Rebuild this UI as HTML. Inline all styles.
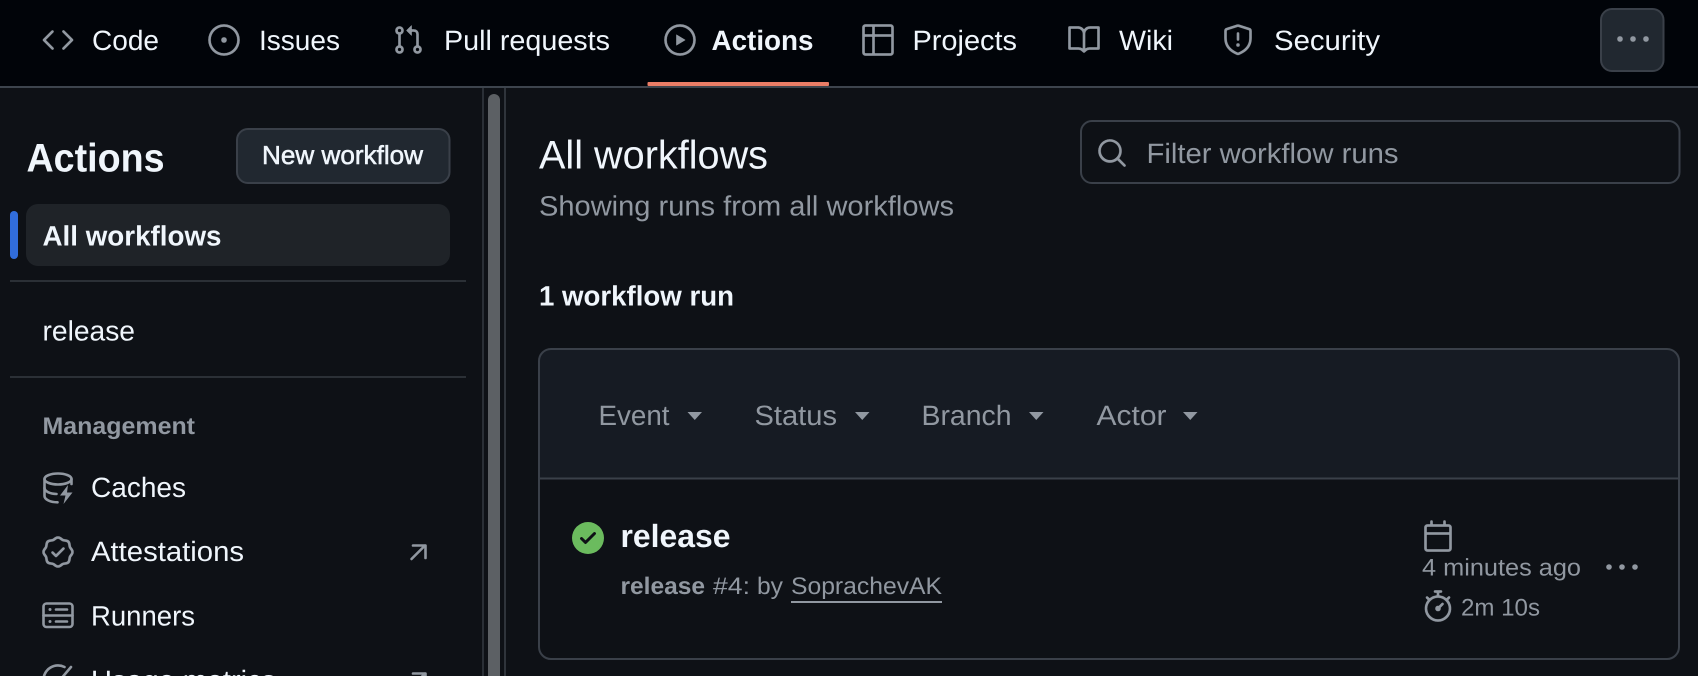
<!DOCTYPE html>
<html lang="en">
<head>
<meta charset="utf-8">
<title>Actions</title>
<style>
html,body{margin:0;padding:0;background:#0e1116;width:1698px;height:676px;overflow:hidden}
svg{display:block;font-family:"Liberation Sans",Arial,sans-serif;text-rendering:geometricPrecision;filter:blur(.3px)}
.t{fill:#f0f6fc}.m{fill:#9198a1}.b{font-weight:700}
.sb{fill:#f0f6fc;stroke:#f0f6fc;stroke-width:.55px}
.i{fill:#9198a1;fill-rule:evenodd;stroke:#0e1116;stroke-width:.18}
.h{stroke:#010409}
.k{stroke:#212830}
.s{fill:none;stroke:#9198a1;stroke-width:2.6;stroke-linecap:round;stroke-linejoin:round}
</style>
</head>
<body>
<svg width="1698" height="676" viewBox="0 0 1698 676" xmlns="http://www.w3.org/2000/svg">
<rect width="1698" height="676" fill="#0e1116"/>
<!-- header -->
<rect width="1698" height="86" fill="#010409"/>
<rect y="86" width="1698" height="2" fill="#3d444d"/>
<rect x="647.5" y="82" width="181.5" height="4" rx="1" fill="#ea7d66"/>

<g transform="translate(42,24) scale(2)"><path class="i h" d="m11.28 3.22 4.25 4.25a.75.75 0 0 1 0 1.06l-4.25 4.25a.749.749 0 0 1-1.275-.326.749.749 0 0 1 .215-.734L13.94 8l-3.72-3.72a.749.749 0 0 1 .326-1.275.749.749 0 0 1 .734.215Zm-6.56 0a.751.751 0 0 1 1.042.018.751.751 0 0 1 .018 1.042L2.06 8l3.72 3.72a.749.749 0 0 1-.326 1.275.749.749 0 0 1-.734-.215L.47 8.53a.75.75 0 0 1 0-1.06Z"/></g>
<text x="92" y="50" font-size="28" class="t" textLength="67" lengthAdjust="spacingAndGlyphs">Code</text>

<g transform="translate(208,24) scale(2)"><path class="i h" d="M8 9.5a1.5 1.5 0 1 0 0-3 1.5 1.5 0 0 0 0 3Z"/><path class="i h" d="M8 0a8 8 0 1 1 0 16A8 8 0 0 1 8 0ZM1.5 8a6.5 6.5 0 1 0 13 0 6.5 6.5 0 0 0-13 0Z"/></g>
<text x="259" y="50" font-size="28" class="t" textLength="81" lengthAdjust="spacingAndGlyphs">Issues</text>

<g transform="translate(392,24) scale(2)"><path class="i h" d="M1.5 3.25a2.25 2.25 0 1 1 3 2.122v5.256a2.251 2.251 0 1 1-1.5 0V5.372A2.25 2.25 0 0 1 1.5 3.25Zm5.677-.177L9.573.677A.25.25 0 0 1 10 .854V2.5h1A2.5 2.5 0 0 1 13.5 5v5.628a2.251 2.251 0 1 1-1.5 0V5a1 1 0 0 0-1-1h-1v1.646a.25.25 0 0 1-.427.177L7.177 3.427a.25.25 0 0 1 0-.354ZM3.75 2.5a.75.75 0 1 0 0 1.5.75.75 0 0 0 0-1.5Zm0 9.5a.75.75 0 1 0 0 1.5.75.75 0 0 0 0-1.5Zm8.25.75a.75.75 0 1 0 1.5 0 .75.75 0 0 0-1.5 0Z"/></g>
<text x="444" y="50" font-size="28" class="t" textLength="166" lengthAdjust="spacingAndGlyphs">Pull requests</text>

<g transform="translate(664,24) scale(2)"><path class="i h" d="M8 0a8 8 0 1 1 0 16A8 8 0 0 1 8 0ZM1.5 8a6.5 6.5 0 1 0 13 0 6.5 6.5 0 0 0-13 0Zm4.879-2.773 4.264 2.559a.25.25 0 0 1 0 .428l-4.264 2.559A.25.25 0 0 1 6 10.559V5.442a.25.25 0 0 1 .379-.215Z"/></g>
<text x="711.5" y="50" font-size="28" class="t b" textLength="102" lengthAdjust="spacingAndGlyphs">Actions</text>

<g transform="translate(862,24) scale(2)"><path class="i h" d="M0 1.75C0 .784.784 0 1.75 0h12.5C15.216 0 16 .784 16 1.75v12.5A1.75 1.75 0 0 1 14.25 16H1.75A1.75 1.75 0 0 1 0 14.25ZM6.5 6.5v8h7.75a.25.25 0 0 0 .25-.25V6.5Zm8-1.5V1.75a.25.25 0 0 0-.25-.25H6.5V5Zm-13 1.5v7.75c0 .138.112.25.25.25H5v-8ZM5 5V1.5H1.75a.25.25 0 0 0-.25.25V5Z"/></g>
<text x="912.500" y="50" font-size="28" class="t" textLength="104.500" lengthAdjust="spacingAndGlyphs">Projects</text>

<g transform="translate(1068,24) scale(2)"><path class="i h" d="M0 1.75A.75.75 0 0 1 .75 1h4.253c1.227 0 2.317.59 3 1.501A3.743 3.743 0 0 1 11.006 1h4.245a.75.75 0 0 1 .75.75v10.5a.75.75 0 0 1-.75.75h-4.507a2.25 2.25 0 0 0-1.591.659l-.622.621a.75.75 0 0 1-1.06 0l-.622-.621A2.25 2.25 0 0 0 5.258 13H.75a.75.75 0 0 1-.75-.75Zm7.251 10.324.004-5.073-.002-2.253A2.25 2.25 0 0 0 5.003 2.5H1.5v9h3.757a3.75 3.75 0 0 1 1.994.574ZM8.755 4.75l-.004 7.322a3.752 3.752 0 0 1 1.992-.572H14.5v-9h-3.495a2.25 2.25 0 0 0-2.25 2.25Z"/></g>
<text x="1119" y="50" font-size="28" class="t" textLength="54" lengthAdjust="spacingAndGlyphs">Wiki</text>

<g transform="translate(1222,24) scale(2)"><path class="i h" d="M7.467.133a1.748 1.748 0 0 1 1.066 0l5.25 1.68A1.75 1.75 0 0 1 15 3.48V7c0 1.566-.32 3.182-1.303 4.682-.983 1.498-2.585 2.813-5.032 3.855a1.697 1.697 0 0 1-1.33 0c-2.447-1.042-4.049-2.357-5.032-3.855C1.32 10.182 1 8.566 1 7V3.48a1.75 1.75 0 0 1 1.217-1.667Zm.61 1.429a.25.25 0 0 0-.153 0l-5.25 1.68a.25.25 0 0 0-.174.238V7c0 1.358.275 2.666 1.057 3.86.784 1.194 2.121 2.34 4.366 3.297a.196.196 0 0 0 .154 0c2.245-.956 3.582-2.104 4.366-3.298C13.225 9.666 13.5 8.36 13.5 7V3.48a.25.25 0 0 0-.174-.237l-5.25-1.68ZM8.75 4.75v3a.75.75 0 0 1-1.5 0v-3a.75.75 0 0 1 1.5 0ZM9 10.5a1 1 0 1 1-2 0 1 1 0 0 1 2 0Z"/></g>
<text x="1274" y="50" font-size="28" class="t" textLength="106" lengthAdjust="spacingAndGlyphs">Security</text>

<rect x="1601" y="9" width="62.500" height="62" rx="11" fill="#212830" stroke="#3a4049" stroke-width="2"/>
<g transform="translate(1617,24) scale(2)"><path class="i k" d="M8 9a1.5 1.5 0 1 0 0-3 1.5 1.5 0 0 0 0 3ZM1.5 9a1.5 1.5 0 1 0 0-3 1.5 1.5 0 0 0 0 3Zm13 0a1.5 1.5 0 1 0 0-3 1.5 1.5 0 0 0 0 3Z"/></g>

<!-- sidebar -->
<text x="26.500" y="171.500" font-size="40" class="t b" textLength="138" lengthAdjust="spacingAndGlyphs">Actions</text>
<rect x="237" y="129" width="212.500" height="54" rx="11" fill="#212830" stroke="#3a4049" stroke-width="2"/>
<text x="262" y="164" font-size="26" class="sb" textLength="161" lengthAdjust="spacingAndGlyphs">New workflow</text>

<rect x="10" y="211" width="8" height="48" rx="4" fill="#316ddb"/>
<rect x="26" y="204" width="424" height="62" rx="12" fill="#1f2328"/>
<text x="42.500" y="245.500" font-size="28" class="t b" textLength="179" lengthAdjust="spacingAndGlyphs">All workflows</text>
<rect x="10" y="280" width="456" height="2" fill="#2b3036"/>
<text x="42.500" y="340.500" font-size="28" class="t" textLength="92.500" lengthAdjust="spacingAndGlyphs">release</text>
<rect x="10" y="376" width="456" height="2" fill="#2b3036"/>
<text x="42.500" y="434" font-size="24" class="m b" textLength="152.500" lengthAdjust="spacingAndGlyphs">Management</text>

<!-- caches -->
<g class="s"><ellipse cx="58" cy="479" rx="13.500" ry="5.500"/><path d="M44.500 479V496c0 3.600 6 6.300 13 6.300"/><path d="M44.500 488c0 3.300 5.500 5.800 12 6"/><path d="M71.500 479v5"/></g>
<path d="M68 485l-8 10.500h5.500l-2 8.500 9-11.500h-5.500z" fill="#9198a1"/>
<text x="91" y="497" font-size="28" class="t" textLength="95" lengthAdjust="spacingAndGlyphs">Caches</text>

<!-- verified -->
<g transform="translate(42,536) scale(2)"><path class="i" d="m9.585.52.929.68c.153.112.331.186.518.215l1.138.175a2.678 2.678 0 0 1 2.24 2.24l.174 1.139c.029.187.103.365.215.518l.68.928a2.677 2.677 0 0 1 0 3.17l-.68.928a1.174 1.174 0 0 0-.215.518l-.175 1.138a2.678 2.678 0 0 1-2.241 2.241l-1.138.175a1.17 1.17 0 0 0-.518.215l-.928.68a2.677 2.677 0 0 1-3.17 0l-.928-.68a1.174 1.174 0 0 0-.518-.215L3.83 14.41a2.678 2.678 0 0 1-2.24-2.24l-.175-1.138a1.17 1.17 0 0 0-.215-.518l-.68-.928a2.677 2.677 0 0 1 0-3.17l.68-.928c.112-.153.186-.331.215-.518l.175-1.14a2.678 2.678 0 0 1 2.24-2.24l1.139-.175c.187-.029.365-.103.518-.215l.928-.68a2.677 2.677 0 0 1 3.17 0ZM7.303 1.728l-.927.68a2.67 2.67 0 0 1-1.18.489l-1.137.174a1.179 1.179 0 0 0-.987.987l-.174 1.136a2.677 2.677 0 0 1-.489 1.18l-.68.928a1.18 1.18 0 0 0 0 1.394l.68.927c.256.348.424.753.489 1.18l.174 1.137c.078.509.478.909.987.987l1.136.174a2.67 2.67 0 0 1 1.18.489l.928.68c.414.305.979.305 1.394 0l.927-.68a2.67 2.67 0 0 1 1.18-.489l1.137-.174a1.18 1.18 0 0 0 .987-.987l.174-1.136a2.67 2.67 0 0 1 .489-1.18l.68-.928a1.176 1.176 0 0 0 0-1.394l-.68-.927a2.686 2.686 0 0 1-.489-1.18l-.174-1.137a1.179 1.179 0 0 0-.987-.987l-1.136-.174a2.677 2.677 0 0 1-1.18-.489l-.928-.68a1.176 1.176 0 0 0-1.394 0ZM11.28 6.78l-3.75 3.75a.75.75 0 0 1-1.06 0L4.72 8.78a.751.751 0 0 1 .018-1.042.751.751 0 0 1 1.042-.018l1.22 1.22 3.22-3.22a.751.751 0 0 1 1.042.018.751.751 0 0 1 .018 1.042Z"/></g>
<text x="91" y="561" font-size="28" class="t" textLength="153" lengthAdjust="spacingAndGlyphs">Attestations</text>
<path class="s" d="M411.500 559L425 545.500M413 545.500H425.500V558"/>

<!-- server -->
<g class="s"><rect x="43.500" y="603.500" width="29" height="23.500" rx="3"/><path d="M43.500 615.500h29"/><path d="M56 609.500h11M56 621.500h11"/></g>
<circle cx="50" cy="609.500" r="1.500" fill="#9198a1"/><circle cx="50" cy="621.500" r="1.500" fill="#9198a1"/>
<text x="91" y="625.500" font-size="28" class="t" textLength="104" lengthAdjust="spacingAndGlyphs">Runners</text>

<!-- meter (cut off) -->
<g class="s"><path d="M43.500 680a14.500 14.500 0 0 1 21-13"/><path d="M60 680l11-13"/></g>
<text x="91" y="690" font-size="28" class="t" textLength="185" lengthAdjust="spacingAndGlyphs">Usage metrics</text>
<path class="s" d="M411.500 687L425 673.500M413 673.500H425.500V686"/>

<!-- splitter -->
<rect x="482" y="88" width="2" height="588" fill="#2a2f36"/>
<rect x="488" y="94" width="12" height="600" rx="6" fill="#5c6064"/>
<rect x="504" y="88" width="2" height="588" fill="#2f343b"/>

<!-- main -->
<text x="539" y="168.500" font-size="40" class="t" textLength="229" lengthAdjust="spacingAndGlyphs">All workflows</text>
<text x="539" y="215.700" font-size="28" class="m" textLength="415" lengthAdjust="spacingAndGlyphs">Showing runs from all workflows</text>
<text x="539" y="305.500" font-size="28" class="t b" textLength="195" lengthAdjust="spacingAndGlyphs">1 workflow run</text>

<rect x="1081" y="121" width="598.500" height="62" rx="11" fill="#0e1116" stroke="#3a4049" stroke-width="2"/>
<g transform="translate(1096,137) scale(2)"><path class="i" d="M10.68 11.740a6 6 0 0 1-7.922-8.982 6 6 0 0 1 8.982 7.922l3.040 3.040a.749.749 0 0 1-.326 1.275.749.749 0 0 1-.734-.215ZM11.500 7a4.499 4.499 0 1 0-8.997 0A4.499 4.499 0 0 0 11.500 7Z"/></g>
<text x="1146.500" y="163" font-size="28" class="m" textLength="252" lengthAdjust="spacingAndGlyphs">Filter workflow runs</text>

<!-- box -->
<path d="M551 349H1667a12 12 0 0 1 12 12V478.500H539V361a12 12 0 0 1 12-12Z" fill="#161b23"/>
<rect x="539" y="349" width="1140" height="310" rx="12" fill="none" stroke="#3a4049" stroke-width="2"/>
<rect x="539" y="477.500" width="1140" height="2" fill="#3a4049"/>

<text x="598.500" y="425" font-size="28" class="m" textLength="71" lengthAdjust="spacingAndGlyphs">Event</text>
<path d="M687.500 412h14.500l-7.250 8z" fill="#9198a1"/>
<text x="754.500" y="425" font-size="28" class="m" textLength="82.500" lengthAdjust="spacingAndGlyphs">Status</text>
<path d="M855 412h14.500l-7.250 8z" fill="#9198a1"/>
<text x="921.500" y="425" font-size="28" class="m" textLength="90" lengthAdjust="spacingAndGlyphs">Branch</text>
<path d="M1029 412h14.500l-7.250 8z" fill="#9198a1"/>
<text x="1096.500" y="425" font-size="28" class="m" textLength="70" lengthAdjust="spacingAndGlyphs">Actor</text>
<path d="M1183 412h14.500l-7.250 8z" fill="#9198a1"/>

<!-- run -->
<g transform="translate(572,522) scale(2)"><path fill="#6bbb5e" fill-rule="evenodd" d="M8 16A8 8 0 1 1 8 0a8 8 0 0 1 0 16Zm3.780-9.720a.751.751 0 0 0-.018-1.042.751.751 0 0 0-1.042-.018L6.750 9.190 5.280 7.720a.751.751 0 0 0-1.042.018.751.751 0 0 0-.018 1.042l2 2a.75.75 0 0 0 1.060 0Z"/></g>
<text x="620.500" y="547" font-size="32" class="t b" textLength="110" lengthAdjust="spacingAndGlyphs">release</text>
<text x="620.500" y="594" font-size="24" class="m b" textLength="84.500" lengthAdjust="spacingAndGlyphs">release</text>
<text x="713" y="594" font-size="24" class="m" textLength="37" lengthAdjust="spacingAndGlyphs">#4:</text>
<text x="757" y="594" font-size="24" class="m" textLength="26" lengthAdjust="spacingAndGlyphs">by</text>
<text x="791" y="594" font-size="24" class="m" textLength="151" lengthAdjust="spacingAndGlyphs">SoprachevAK</text>
<rect x="791" y="601" width="151" height="2" fill="#9198a1"/>

<g transform="translate(1422,520) scale(2)"><path class="i" d="M4.750 0a.75.75 0 0 1 .75.75V2h5V.75a.75.75 0 0 1 1.500 0V2h1.250c.966 0 1.750.784 1.750 1.750v10.500A1.750 1.750 0 0 1 13.250 16H2.750A1.750 1.750 0 0 1 1 14.250V3.750C1 2.784 1.784 2 2.750 2H4V.75A.75.75 0 0 1 4.750 0ZM2.500 7.500v6.750c0 .138.112.25.25.25h10.500a.25.25 0 0 0 .25-.25V7.500Zm10.750-4H2.750a.25.25 0 0 0-.25.25V6h11V3.750a.25.25 0 0 0-.25-.25Z"/></g>
<text x="1422" y="575.500" font-size="24" class="m" textLength="159" lengthAdjust="spacingAndGlyphs">4 minutes ago</text>
<circle cx="1609" cy="567" r="2.800" fill="#9198a1"/><circle cx="1622" cy="567" r="2.800" fill="#9198a1"/><circle cx="1635" cy="567" r="2.800" fill="#9198a1"/>
<g transform="translate(1422,590) scale(2)"><path class="i" d="M5.750.75A.75.75 0 0 1 6.500 0h3a.75.75 0 0 1 0 1.500h-.75v1l-.001.041a6.724 6.724 0 0 1 3.464 1.435l.007-.006.75-.75a.749.749 0 0 1 1.275.326.749.749 0 0 1-.215.734l-.75.75-.006.007a6.750 6.750 0 1 1-10.548 0L2.720 5.030l-.75-.75a.751.751 0 0 1 .018-1.042.751.751 0 0 1 1.042-.018l.75.75.007.006A6.720 6.720 0 0 1 7.250 2.541V1.500H6.500a.75.75 0 0 1-.75-.75ZM8 14.500a5.250 5.250 0 1 0-.001-10.501A5.250 5.250 0 0 0 8 14.500Zm.389-6.700 1.330-1.330a.75.75 0 1 1 1.061 1.060L9.450 8.861A1.503 1.503 0 0 1 8 10.750a1.499 1.499 0 1 1 .389-2.950Z"/></g>
<text x="1461" y="615.500" font-size="24" class="m" textLength="79" lengthAdjust="spacingAndGlyphs">2m 10s</text>
</svg>
</body>
</html>
